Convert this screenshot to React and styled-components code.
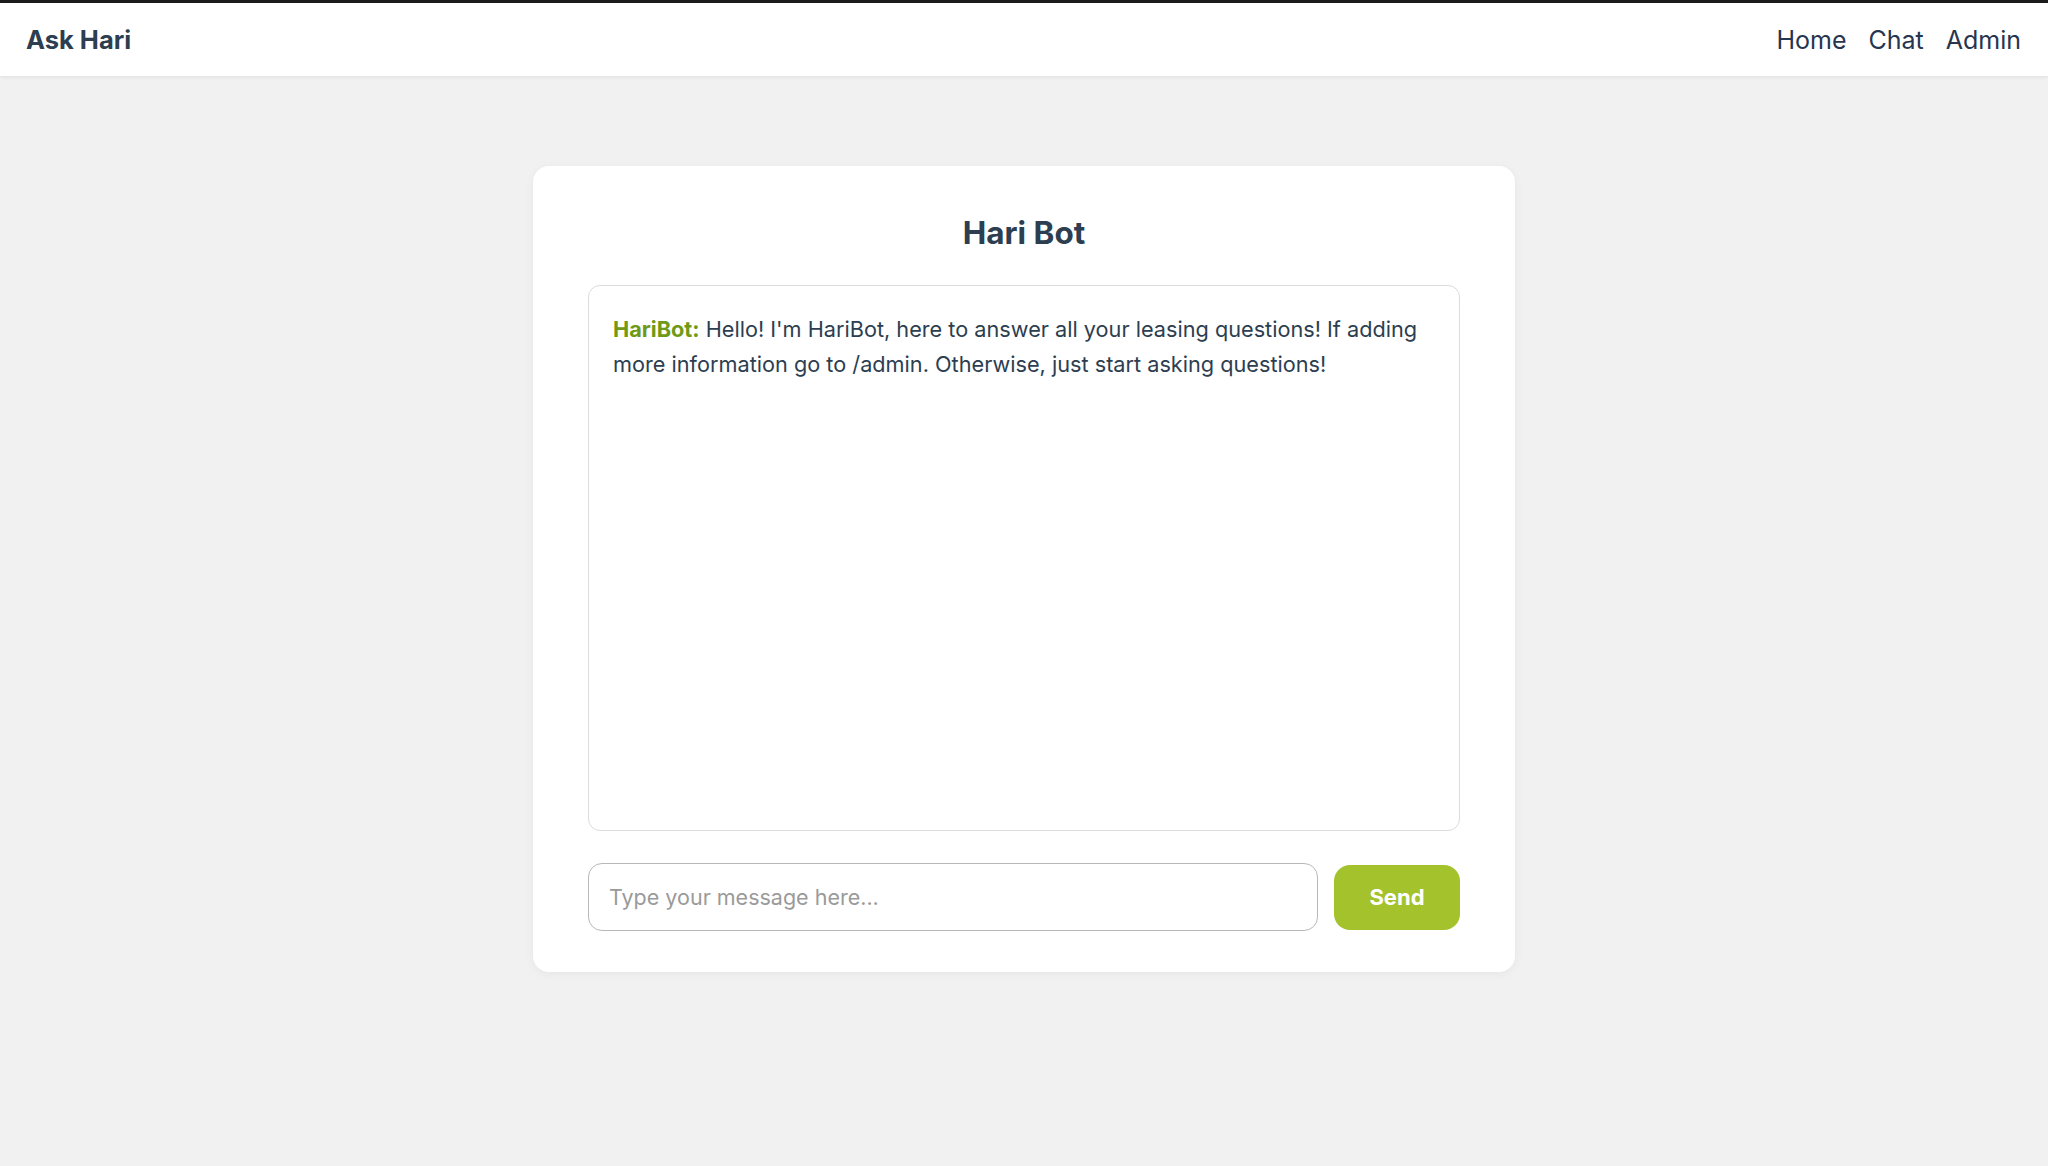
import React, { useState } from "react";
import styled, { createGlobalStyle } from "styled-components";

const GlobalStyle = createGlobalStyle`
  html, body {
    margin: 0;
    padding: 0;
  }
  body {
    background: #f1f1f1;
    font-family: Inter, "Noto Sans", "Liberation Sans", sans-serif;
    color: #2c3e50;
  }
  * {
    box-sizing: border-box;
  }
`;

const Page = styled.div`
  min-height: 100vh;
  border-top: 3px solid #1c1c1c;
  background: #f1f1f1;
`;

const NavBar = styled.header`
  height: 73px;
  background: #ffffff;
  display: flex;
  align-items: center;
  justify-content: space-between;
  padding: 0 27px 0 26px;
  box-shadow: 0 1px 4px rgba(0, 0, 0, 0.08);
`;

const Brand = styled.div`
  font-size: 25.5px;
  font-weight: 700;
  color: #2c3e50;
`;

const NavLinks = styled.nav`
  display: flex;
  gap: 22px;
`;

const NavLink = styled.a`
  font-size: 25px;
  color: #263550;
  text-decoration: none;
  cursor: pointer;
`;

const Main = styled.main`
  display: flex;
  justify-content: center;
  padding-top: 90px;
`;

const Card = styled.section`
  width: 982px;
  background: #ffffff;
  border-radius: 16px;
  padding: 47px 55px 41px 55px;
  box-shadow: 0 2px 10px rgba(0, 0, 0, 0.05);
`;

const Title = styled.h2`
  margin: 0 0 32px;
  text-align: center;
  font-size: 31.5px;
  line-height: 40px;
  font-weight: 700;
  color: #2c3e50;
`;

const ChatBox = styled.div`
  height: 546px;
  border: 1.5px solid #dcdcdc;
  border-radius: 12px;
  padding: 26px 24px 22px;
  overflow-y: auto;
`;

const Message = styled.p`
  margin: 0;
  font-size: 21.7px;
  line-height: 35px;
  color: #2c3e50;
`;

const Sender = styled.strong`
  color: #6f9a17;
  font-weight: 700;
`;

const InputRow = styled.form`
  display: flex;
  align-items: center;
  gap: 16px;
  margin-top: 32px;
`;

const TextInput = styled.input`
  flex: 1;
  height: 68px;
  border: 1.5px solid #b8b8b8;
  border-radius: 14px;
  padding: 0 20px;
  font-family: inherit;
  font-size: 21.5px;
  color: #2c3e50;
  outline: none;

  &::placeholder {
    color: #9a9a9a;
  }
`;

const SendButton = styled.button`
  width: 126px;
  height: 65px;
  border: none;
  border-radius: 16px;
  background: #a4c22b;
  color: #ffffff;
  font-family: inherit;
  font-size: 22px;
  font-weight: 700;
  cursor: pointer;
`;

export default function App() {
  const [text, setText] = useState("");
  const [messages, setMessages] = useState([
    {
      from: "HariBot",
      body: "Hello! I'm HariBot, here to answer all your leasing questions! If adding more information go to /admin. Otherwise, just start asking questions!",
    },
  ]);

  const send = (e) => {
    e.preventDefault();
    if (!text.trim()) return;
    setMessages([...messages, { from: "You", body: text }]);
    setText("");
  };

  return (
    <>
      <GlobalStyle />
      <Page>
        <NavBar>
          <Brand>Ask Hari</Brand>
          <NavLinks>
            <NavLink>Home</NavLink>
            <NavLink>Chat</NavLink>
            <NavLink>Admin</NavLink>
          </NavLinks>
        </NavBar>
        <Main>
          <Card>
            <Title>Hari Bot</Title>
            <ChatBox>
              {messages.map((m, i) => (
                <Message key={i}>
                  <Sender>{m.from}:</Sender> {m.body}
                </Message>
              ))}
            </ChatBox>
            <InputRow onSubmit={send}>
              <TextInput
                placeholder="Type your message here..."
                value={text}
                onChange={(e) => setText(e.target.value)}
              />
              <SendButton type="submit">Send</SendButton>
            </InputRow>
          </Card>
        </Main>
      </Page>
    </>
  );
}
